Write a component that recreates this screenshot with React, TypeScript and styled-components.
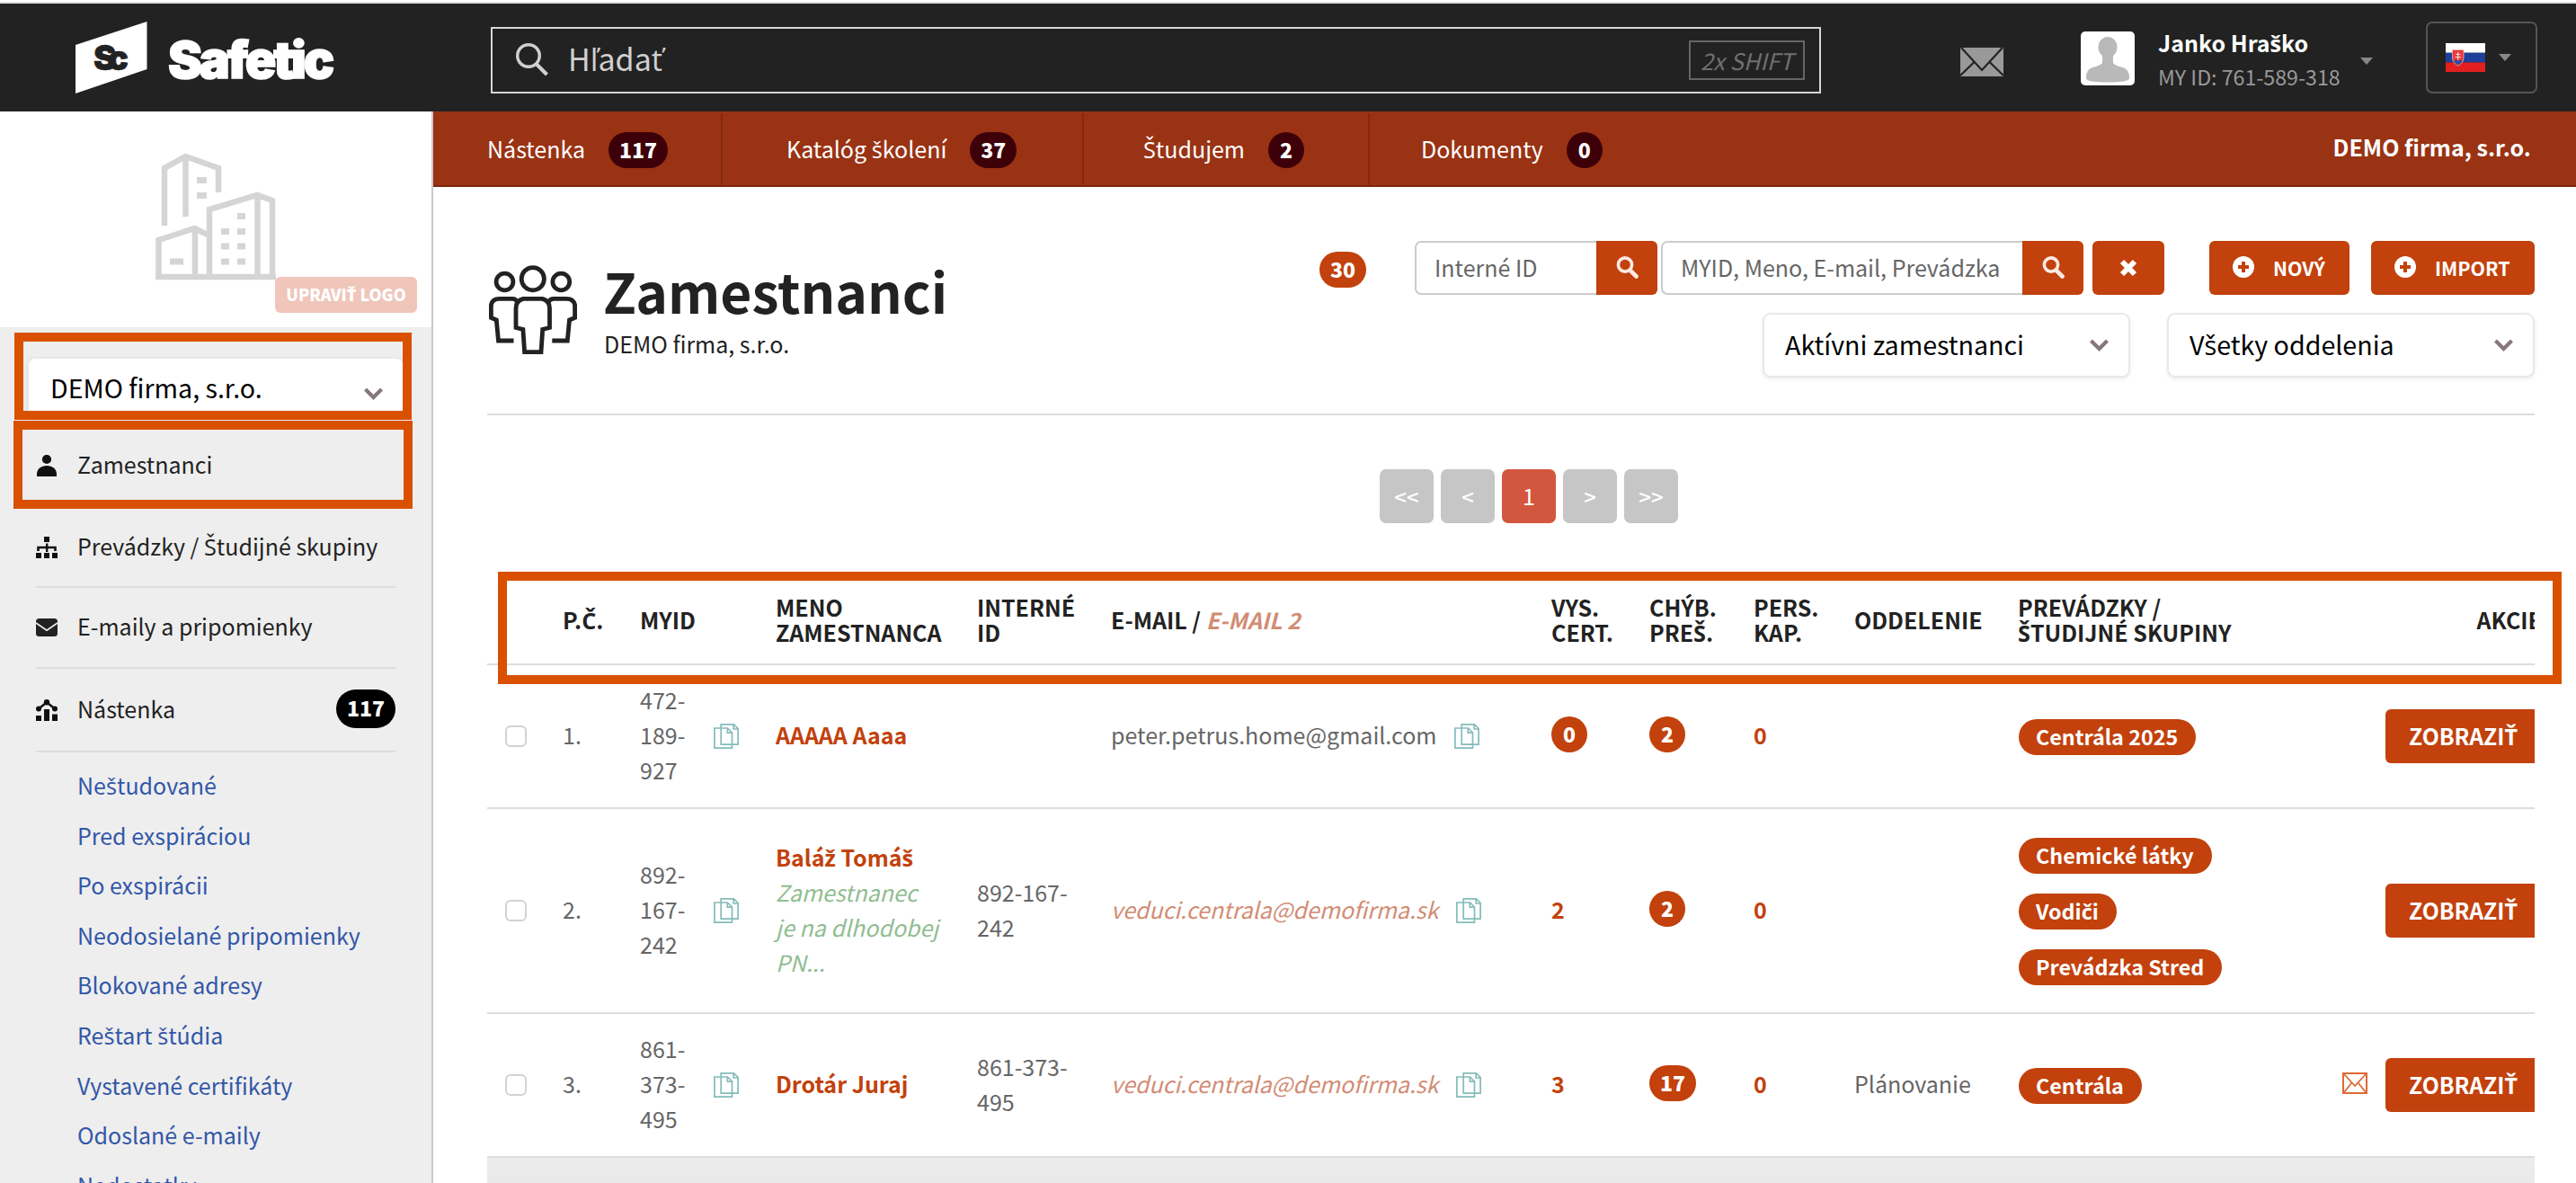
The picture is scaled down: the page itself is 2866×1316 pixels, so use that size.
import React from "react";
import styled, { createGlobalStyle, css } from "styled-components";

const BRAND = "#c2410c";
const MARK = "#d95000";
const INK = "#222";
const MUTED = "#666";
const LINE = "#ddd";

const GlobalStyle = createGlobalStyle`
  * { box-sizing: border-box; }
  html, body { margin: 0; padding: 0; }
  body {
    width: 2866px; height: 1316px; overflow: hidden; background: #fff; color: ${INK};
    font-family: "Noto Sans CJK SC", "Open Sans", sans-serif;
    font-size: 25px; line-height: 39px;
  }
  h1, p, ul { margin: 0; padding: 0; }
`;

/* Letters with a caron are set in Open Sans, which has them precomposed. */
const Accented = styled.span`
  font-family: "Open Sans", "Noto Sans", sans-serif;
  font-size: 1.01em;
  line-height: 0;
`;

const T = ({ children }: { children: string }) => (
  <>
    {children.split(/([čďěľňřšťžČĎĚĽŇŘŠŤŽ])/).map((part, i) =>
      i % 2 ? <Accented key={i}>{part}</Accented> : part
    )}
  </>
);

/* ---------- shared ---------- */

const Badge = styled.span<{ $bg?: string; $h?: number; $minW?: number }>`
  display: inline-flex; align-items: center; justify-content: center;
  height: ${(p) => p.$h ?? 40}px; min-width: ${(p) => p.$minW ?? 40}px; padding: 0 12px 2px;
  border-radius: 22px; background: ${(p) => p.$bg ?? BRAND};
  color: #fff; font-size: 23px; font-weight: 900; line-height: 1;
`;

const Highlight = styled.div<{ $l: number; $t: number; $w: number; $h: number }>`
  position: absolute; z-index: 5; pointer-events: none;
  left: ${(p) => p.$l}px; top: ${(p) => p.$t}px; width: ${(p) => p.$w}px; height: ${(p) => p.$h}px;
  border: 10px solid ${MARK};
`;

const SelectBox = styled.div<{ $w: number; $side?: boolean }>`
  display: flex; align-items: center; justify-content: space-between;
  width: ${(p) => p.$w}px; height: 72px; padding: 0 22px 3px 23px;
  border: 2px solid #e8e8ec; border-radius: 9px; background: #fff;
  box-shadow: 0 2px 4px rgba(0, 0, 0, 0.07);
  color: #000; font-size: 28.6px;
  svg { margin-top: 3px; }
  ${(p) => p.$side && css`padding: 0 22px 6px 24px; svg { margin-top: 15px; }`}
`;

const Chevron = () => (
  <svg width="21" height="14" viewBox="0 0 21 14" fill="none">
    <path d="M1.500 2L10.500 11L19.500 2" stroke="#86777b" strokeWidth="4.200" />
  </svg>
);

const Caret = () => (
  <svg width="14" height="8" viewBox="0 0 14 8"><path d="M0 0H14L7 8Z" fill="#888" /></svg>
);

const CopyIcon = () => (
  <svg width="28" height="28" viewBox="0 0 28 28" fill="none" stroke="#84bcba" strokeWidth="1.700">
    <path d="M8.200 .9H22.500L27.100 5.500V23.200H8.200Z" />
    <path d="M22.200 .9V6H27" />
    <path d="M.9 5H15.500L20.500 10V27.100H.9Z" />
    <path d="M15.300 5V10.200H20.400" />
  </svg>
);

/* ---------- top bar ---------- */

const TopBar = styled.header`
  display: flex; align-items: center; height: 124px; padding: 4px 42px 0 84px;
  border-top: 2px solid #fff; box-shadow: inset 0 2px #dedede; background: ${INK};
`;
const Logo = styled.svg`flex: none; margin-right: 172px;`;
const SearchBox = styled.div`
  display: flex; align-items: center; width: 1480px; height: 74px; margin-top: 4px;
  padding: 0 16px 0 25px; border: 2px solid #d6d6d2; color: #d0d0d0;
`;
const SearchLabel = styled.span`flex: 1; margin: -6px 0 0 21px; font-size: 34px;`;
const Kbd = styled.span`
  display: flex; align-items: center; justify-content: center; width: 129px; height: 44px;
  padding-bottom: 1px; border: 2px solid #666; color: #707070; font-size: 25.5px; font-style: italic;
`;
const MailIcon = styled.svg`margin: 8px 86px 0 155px;`;
const Avatar = styled.svg`flex: none;`;
const Who = styled.div`width: 209px; margin: 2px 0 0 26px; line-height: 38px; white-space: nowrap;`;
const WhoName = styled.div`color: #fff; font-size: 25px; font-weight: 700;`;
const WhoId = styled.div`color: #999; font-size: 23.2px;`;
const CaretSlot = styled.span`display: flex; margin: 6px 59px 0 16px;`;
const LangBox = styled.div`
  display: flex; align-items: center; gap: 15px; width: 124px; height: 80px; margin-top: -2px;
  padding-left: 20px; border: 2px solid #555; border-radius: 7px;
`;

/* ---------- frame ---------- */

const Frame = styled.div`display: grid; grid-template-columns: 482px minmax(0, 1fr); height: 1192px;`;
const Side = styled.aside`
  display: flex; flex-direction: column; overflow: hidden;
  border-right: 2px solid #c9c9c9; background: #eee;
`;
const LogoPanel = styled.div`
  position: relative; display: flex; justify-content: center; height: 240px;
  padding-top: 46px; background: #fff; flex: none;
`;
const EditLogo = styled.span`
  position: absolute; right: 16px; bottom: 16px; width: 158px; height: 40px;
  display: flex; align-items: center; justify-content: center; padding-bottom: 1px;
  border-radius: 6px; background: #f0c6ba; color: #fff; font-size: 17.9px; font-weight: 900;
`;
const CompanyPicker = styled.div`position: relative; height: 104px; padding: 33px 0 0 30px; flex: none;`;
const MenuItem = styled.div<{ $h: number; $pb?: number; $pt?: number }>`
  position: relative; display: flex; align-items: center; flex: none;
  height: ${(p) => p.$h}px; margin: 0 40px; padding: ${(p) => p.$pt ?? 0}px 0 ${(p) => p.$pb ?? 0}px;
  border-bottom: 2px solid ${LINE};
  svg { margin-right: 22px; margin-top: 2px; }
  ${Badge} { margin-left: auto; }
`;
const MenuText = styled.div`white-space: nowrap;`;
const SubList = styled.ul`padding: 9px 0 0 86px; list-style: none;`;
const SubLink = styled.li`height: 55.6px; line-height: 55.6px; color: #3257a8; white-space: nowrap;`;

const NavBar = styled.nav`
  display: flex; height: 84px; border-bottom: 2px solid #7f260e; background: #993314; color: #fff;
`;
const NavItem = styled.div<{ $w: number; $pl: number; $last?: boolean }>`
  display: flex; align-items: center; gap: 26px; width: ${(p) => p.$w}px; margin-top: 2px;
  padding: 0 0 2px ${(p) => p.$pl}px; white-space: nowrap;
  border-right: ${(p) => (p.$last ? "0" : "2px solid #85290f")};
  ${Badge} { margin-top: 4px; }
`;
const NavCompany = styled.div`margin: 20px 50px 0 auto; font-weight: 700;`;

const Content = styled.main`padding: 0 46px 0 60px; overflow: hidden;`;
const PageHead = styled.section`
  display: flex; justify-content: space-between; height: 254px; border-bottom: 2px solid ${LINE};
`;
const TitleGroup = styled.div`display: flex; padding: 85px 0 0 0; gap: 29px;`;
const PeopleIcon = styled.svg`margin: 2px 0 0 2px;`;
const Title = styled.h1`font-size: 60.5px; font-weight: 700; line-height: 60px;`;
const Subtitle = styled.p`margin: 11px 0 0 1px; line-height: 36px;`;
const Tools = styled.div`display: flex; flex-direction: column; align-items: flex-end; gap: 20px; padding-top: 60px;`;
const ToolRow = styled.div<{ $gap?: number }>`display: flex; align-items: center; gap: ${(p) => p.$gap ?? 0}px;`;
const CountSlot = styled.span`display: flex; margin: 4px 54px 0 0;`;
const Field = styled.div<{ $w: number; $mr: number }>`display: flex; width: ${(p) => p.$w}px; height: 60px; margin-right: ${(p) => p.$mr}px;`;
const Input = styled.div`
  flex: 1; padding-left: 20px; line-height: 54px; color: ${MUTED}; white-space: nowrap;
  border: 2px solid #ccc; border-right: 0; border-radius: 7px 0 0 7px;
`;
const IconButton = styled.div<{ $w: number; $joined?: boolean; $mr?: number }>`
  display: flex; align-items: center; justify-content: center; width: ${(p) => p.$w}px; height: 60px;
  margin-right: ${(p) => p.$mr ?? 0}px; background: ${BRAND};
  border-radius: ${(p) => (p.$joined ? "0 6px 6px 0" : "6px")};
`;
const Button = styled.div<{ $w?: number; $size?: number }>`
  display: flex; align-items: center; gap: 21px; height: 60px; padding: 0 26px 2px;
  ${(p) => p.$w && `width: ${p.$w}px;`}
  flex: none; border-radius: 6px; background: ${BRAND}; color: #fff; white-space: nowrap;
  font-size: ${(p) => p.$size ?? 21.4}px; font-weight: 700;
`;

const Pager = styled.div`display: flex; justify-content: center; gap: 8px; padding: 60px 0 58px 40px;`;
const PageButton = styled.span<{ $on?: boolean }>`
  display: flex; align-items: center; justify-content: center; width: 60px; height: 60px;
  border-radius: 7px; padding-bottom: 2px; color: #fff;
  font-size: ${(p) => (p.$on ? 25 : 24)}px; font-weight: ${(p) => (p.$on ? 400 : 500)};
  background: ${(p) => (p.$on ? "#d3573f" : "#c6c6c6")};
`;

/* ---------- table ---------- */

const TableWrap = styled.section`position: relative;`;
const TableClip = styled.div`overflow: hidden;`;
const Row = styled.div<{ $h: number; $head?: boolean }>`
  display: grid;
  grid-template-columns: 64px 86px 151px 224px 149px 490px 109px 116px 112px 182px 299px 284px;
  align-items: center; height: ${(p) => p.$h}px; width: 2286px;
  padding: 0 0 ${(p) => (p.$head ? 0 : 3)}px 20px;
  border-bottom: 2px solid ${LINE}; color: ${MUTED};
  ${(p) => p.$head && css`color: ${INK}; font-weight: 700; line-height: 28px; white-space: nowrap;`}
`;
const FootRow = styled.div`height: 60px; background: linear-gradient(#ececec, #e6e6e6);`;
const Check = styled.span`
  width: 24px; height: 24px; margin-top: 2px; border: 2px solid #d2d2d2; border-radius: 6px; background: #fff;
`;
const IdCell = styled.div`display: flex; align-items: center; svg { margin-top: 3px; }`;
const IdText = styled.div`width: 82px;`;
const Strong = styled.div`color: ${BRAND}; font-weight: 700; white-space: nowrap;`;
const Note = styled.div`color: #90bd90; font-style: italic; white-space: nowrap;`;
const Faded = styled.span`color: #d28c74; font-style: italic;`;
const MailCell = styled.div`display: flex; align-items: center; gap: 20px; svg { margin-top: 3px; }`;
const BadgeSlot = styled.div`display: flex; margin-top: -1px;`;
const Pills = styled.div`display: flex; flex-direction: column; align-items: flex-start; gap: 22px; margin-top: 5px; padding-left: 1px;`;
const Pill = styled.span`
  height: 40px; padding: 0 20px 0 19px; border-radius: 20px; background: ${BRAND}; color: #fff;
  font-size: 23.3px; font-weight: 700; line-height: 38px; white-space: nowrap;
`;
const Actions = styled.div`display: flex; justify-content: flex-end; align-items: center; gap: 20px; margin-top: 3px;`;
const HeadRight = styled.div`text-align: right;`;
const Letter = styled.svg`margin-top: -4px;`;

const LogoArt = () => (
  <Logo width="290" height="82" viewBox="84 24 290 82">
    <path d="M84 50L163.500 24V77L84 104Z" fill="#fff" />
    <text x="104" y="77.500" fontFamily="Inter" fontWeight="900" fontSize="38" textLength="39" fill={INK} stroke={INK} strokeWidth="0.600">Sc</text>
    <text x="187" y="86.500" fontFamily="Inter" fontWeight="900" fontSize="57" textLength="185" fill="#fff" stroke="#fff" strokeWidth="1.600">Safetic</text>
  </Logo>
);

const Building = () => (
  <svg width="134" height="142" viewBox="0 0 134 142" fill="none" stroke="#d5d5d5" strokeWidth="6.500">
    <path d="M10 81V17L33.500 4L70 17V44" />
    <path d="M33.500 5V71" />
    <path d="M60 139V63L113 47L130 53V139" />
    <path d="M113.500 47V139M44 86V139" />
    <path d="M3.500 139V97L43.500 84L58 91" />
    <path d="M0 138H134" />
    <g fill="#d5d5d5" stroke="none">
      <path d="M46 27h11v7H46zM46 44h11v7H46zM91 67h9v7H91zM73 84h9v7H73zM91 84h9v7H91zM73 100.500h9v7H73zM91 100.500h9v7H91zM73 117.500h9v7H73zM91 117.500h9v7H91zM16 117.500h15v7H16z" />
    </g>
  </svg>
);

const People = () => (
  <PeopleIcon width="98" height="99" viewBox="0 0 98 99" fill="none" stroke={INK} strokeWidth="4.800">
    <circle cx="48.800" cy="15.200" r="12.600" />
    <circle cx="17.500" cy="18.500" r="9.400" />
    <circle cx="80.300" cy="18.500" r="9.400" />
    <path d="M38 37.400H59.500Q67.500 39.500 67.500 48V69.500L59.700 71.500L58 96.600H39.600L37.900 71.500L30 69.500V48Q30 39.500 38 37.400Z" />
    <path d="M27.500 84H10.500L8.300 61L2.400 58.500V44Q4 37.400 11.500 37.400H26Q30 37.500 31.500 41" />
    <path d="M70.300 84H87.300L89.500 61L95.600 58.500V44Q94 37.400 86.300 37.400H72Q68 37.500 66 41" />
  </PeopleIcon>
);

const Flag = () => (
  <svg width="44" height="32" viewBox="0 0 44 32">
    <path d="M0 0H44V10.700H0Z" fill="#fff" />
    <path d="M0 10.700H44V21.400H0Z" fill="#1f3f9a" />
    <path d="M0 21.400H44V32H0Z" fill="#e3201f" />
    <path d="M7.500 7.500H20V16Q20 22 13.700 25Q7.500 22 7.500 16Z" fill="#e8383a" stroke="#f3b8bb" strokeWidth="0.800" />
    <path d="M13.700 10V18.500M11 12.500H16.500M10.500 15.500H17" stroke="#f6d5d8" strokeWidth="1.200" />
    <path d="M9 20Q11 18 13.700 19.500Q16.500 18 18.500 20Q17 23 13.700 24.500Q10.500 23 9 20Z" fill="#2c4ba3" />
  </svg>
);

const Magnifier = () => (
  <svg width="26" height="26" viewBox="0 0 26 26" fill="none" stroke="#fbe9e2" strokeWidth="3.600">
    <circle cx="11" cy="9.500" r="7.600" />
    <path d="M16.500 15.500L23.500 22.500" strokeWidth="4.600" strokeLinecap="round" />
  </svg>
);

const PlusCircle = () => (
  <svg width="24" height="24" viewBox="0 0 24 24">
    <circle cx="12" cy="12" r="12" fill="#fff" />
    <path d="M12 6V18M6 12H18" stroke={BRAND} strokeWidth="4" />
  </svg>
);

const sideIcons = {
  person: (
    <svg width="24" height="24" viewBox="0 0 24 24" fill="#111">
      <circle cx="12" cy="5" r="5.100" /><path d="M1 24V21.500C1 15.500 6 12 12 12S23 15.500 23 21.500V24Z" />
    </svg>
  ),
  tree: (
    <svg width="24" height="24" viewBox="0 0 24 24" fill="#111">
      <path d="M9 0h6v6H9zM0 18h6v6H0zM9 18h6v6H9zM18 18h6v6H18zM11 7.500h2.400V17H11z" />
      <path d="M2.500 16V12H21.500V16" fill="none" stroke="#111" strokeWidth="2.600" />
    </svg>
  ),
  mail: (
    <svg width="24" height="20" viewBox="0 0 24 20">
      <rect width="24" height="20" rx="3.500" fill={INK} />
      <path d="M0 5L12 13.200L24 5" fill="none" stroke="#eee" strokeWidth="1.800" />
    </svg>
  ),
  chart: (
    <svg width="24" height="24" viewBox="0 0 24 24" fill="#111">
      <path d="M0 18h6v6H0zM9 11h6v13H9zM18 16.500h6V24H18z" />
      <circle cx="3" cy="10.500" r="3" /><circle cx="12" cy="3.200" r="3.200" /><circle cx="21" cy="10.500" r="3" />
      <path d="M3 10.500L12 3.200L21 10.500" fill="none" stroke="#111" strokeWidth="2.400" />
    </svg>
  ),
};

const subLinks = [
  "Neštudované", "Pred exspiráciou", "Po exspirácii", "Neodosielané pripomienky", "Blokované adresy",
  "Reštart štúdia", "Vystavené certifikáty", "Odoslané e-maily", "Nedostatky",
];

type Employee = {
  h: number; id: string[]; name: string; note?: string[]; internal?: string[]; email: string; secondary?: boolean;
  certs: string; certsBadge?: boolean; missing: string; dept?: string; groups: string[]; letter?: boolean;
};

const employees: Employee[] = [
  { h: 160, id: ["472-", "189-", "927"], name: "AAAAA Aaaa", email: "peter.petrus.home@gmail.com", certs: "0", certsBadge: true, missing: "2", groups: ["Centrála 2025"] },
  { h: 228, id: ["892-", "167-", "242"], name: "Baláž Tomáš", note: ["Zamestnanec", "je na dlhodobej", "PN..."], internal: ["892-167-", "242"], email: "veduci.centrala@demofirma.sk", secondary: true, certs: "2", missing: "2", groups: ["Chemické látky", "Vodiči", "Prevádzka Stred"] },
  { h: 160, id: ["861-", "373-", "495"], name: "Drotár Juraj", internal: ["861-373-", "495"], email: "veduci.centrala@demofirma.sk", secondary: true, certs: "3", missing: "17", dept: "Plánovanie", groups: ["Centrála"], letter: true },
];

const headings = [["P.Č."], ["MYID"], ["MENO", "ZAMESTNANCA"], ["INTERNÉ", "ID"]];
const headings2 = [["VYS.", "CERT."], ["CHÝB.", "PREŠ."], ["PERS.", "KAP."], ["ODDELENIE"], ["PREVÁDZKY /", "ŠTUDIJNÉ SKUPINY"]];

const Lines = ({ of }: { of: string[] }) => (
  <div>{of.map((l) => <div key={l}><T>{l}</T></div>)}</div>
);

const EmployeeRow = ({ e, n }: { e: Employee; n: number }) => (
  <Row $h={e.h}>
    <Check />
    <div>{n}.</div>
    <IdCell><IdText><Lines of={e.id} /></IdText><CopyIcon /></IdCell>
    <div>
      <Strong><T>{e.name}</T></Strong>
      {e.note?.map((l) => <Note key={l}>{l}</Note>)}
    </div>
    <Lines of={e.internal ?? []} />
    <MailCell>{e.secondary ? <Faded>{e.email}</Faded> : <span>{e.email}</span>}<CopyIcon /></MailCell>
    {e.certsBadge ? <BadgeSlot><Badge>{e.certs}</Badge></BadgeSlot> : <Strong>{e.certs}</Strong>}
    <BadgeSlot><Badge>{e.missing}</Badge></BadgeSlot>
    <Strong>0</Strong>
    <div>{e.dept}</div>
    <Pills>{e.groups.map((g) => <Pill key={g}><T>{g}</T></Pill>)}</Pills>
    <Actions>
      {e.letter && (
        <Letter width="28" height="24" viewBox="0 0 28 24" fill="none" stroke="#df6a35" strokeWidth="1.800">
          <path d="M1 1H27V23H1Z" strokeWidth="2" /><path d="M2 2L14 15L26 2M2 22L10.500 11.500M26 22L17.500 11.500" />
        </Letter>
      )}
      <Button $size={24.8} $w={174}><span><T>ZOBRAZIŤ</T></span></Button>
    </Actions>
  </Row>
);

export default function App() {
  return (
    <>
      <GlobalStyle />
      <TopBar>
        <LogoArt />
        <SearchBox>
          <svg width="38" height="38" viewBox="0 0 38 38" fill="none" stroke="#d0d0d0" strokeWidth="3.400">
            <circle cx="15" cy="14" r="12.300" /><path d="M23.500 23L35.500 35" strokeWidth="4" />
          </svg>
          <SearchLabel><T>Hľadať</T></SearchLabel>
          <Kbd>2x SHIFT</Kbd>
        </SearchBox>
        <MailIcon width="48" height="32" viewBox="0 0 48 32">
          <path d="M0 0H48V32H0Z" fill="#999" />
          <path d="M1 0L24 25L47 0M0 31L16 15.500M48 31L32 15.500" fill="none" stroke={INK} strokeWidth="2.200" />
        </MailIcon>
        <Avatar width="60" height="60" viewBox="0 0 60 60">
          <rect width="60" height="60" rx="5" fill="#fff" />
          <ellipse cx="30" cy="17.500" rx="10.500" ry="11.500" fill="#b9b9b9" />
          <path d="M24 24H36V35Q38 38 47 40Q54 42 54 52Q54 56.500 30 56.500T6 52Q6 42 13 40Q22 38 24 35Z" fill="#b9b9b9" />
        </Avatar>
        <Who>
          <WhoName><T>Janko Hraško</T></WhoName>
          <WhoId>MY ID: 761-589-318</WhoId>
        </Who>
        <CaretSlot><Caret /></CaretSlot>
        <LangBox><Flag /><Caret /></LangBox>
      </TopBar>

      <Frame>
        <Side>
          <LogoPanel>
            <Building />
            <EditLogo><span><T>UPRAVIŤ LOGO</T></span></EditLogo>
          </LogoPanel>
          <CompanyPicker>
            <Highlight $l={16} $t={6} $w={442} $h={97} />
            <SelectBox $w={420} $side>DEMO firma, s.r.o.<Chevron /></SelectBox>
          </CompanyPicker>
          <MenuItem $h={96} $pt={3}>
            <Highlight $l={-25} $t={0} $w={444} $h={98} />
            {sideIcons.person}<MenuText>Zamestnanci</MenuText>
          </MenuItem>
          <MenuItem $h={90} $pb={1}>{sideIcons.tree}<MenuText><T>Prevádzky / Študijné skupiny</T></MenuText></MenuItem>
          <MenuItem $h={90} $pb={3}>{sideIcons.mail}<MenuText>E-maily a pripomienky</MenuText></MenuItem>
          <MenuItem $h={93} $pb={2}>{sideIcons.chart}<MenuText>Nástenka</MenuText><Badge $bg="#000" $h={43} $minW={66}>117</Badge></MenuItem>
          <SubList>{subLinks.map((l) => <SubLink key={l}><T>{l}</T></SubLink>)}</SubList>
        </Side>

        <div>
          <NavBar>
            <NavItem $w={322} $pl={60}>Nástenka<Badge $bg="#3d0009">117</Badge></NavItem>
            <NavItem $w={402} $pl={71}><span><T>Katalóg školení</T></span><Badge $bg="#3d0009">37</Badge></NavItem>
            <NavItem $w={318} $pl={66}><span><T>Študujem</T></span><Badge $bg="#3d0009">2</Badge></NavItem>
            <NavItem $w={322} $pl={57} $last>Dokumenty<Badge $bg="#3d0009">0</Badge></NavItem>
            <NavCompany>DEMO firma, s.r.o.</NavCompany>
          </NavBar>
          <Content>
            <PageHead>
              <TitleGroup>
                <People />
                <div>
                  <Title>Zamestnanci</Title>
                  <Subtitle>DEMO firma, s.r.o.</Subtitle>
                </div>
              </TitleGroup>
              <Tools>
                <ToolRow>
                  <CountSlot><Badge>30</Badge></CountSlot>
                  <Field $w={270} $mr={4}><Input>Interné ID</Input><IconButton $w={68} $joined><Magnifier /></IconButton></Field>
                  <Field $w={470} $mr={10}><Input>MYID, Meno, E-mail, Prevádzka</Input><IconButton $w={68} $joined><Magnifier /></IconButton></Field>
                  <IconButton $w={80} $mr={50}>
                    <svg width="20" height="20" viewBox="0 0 20 20"><path d="M3 3L17 17M17 3L3 17" stroke="#fff" strokeWidth="6" /></svg>
                  </IconButton>
                  <ToolRow $gap={24}>
                    <Button $w={156}><PlusCircle />NOVÝ</Button>
                    <Button $w={182}><PlusCircle />IMPORT</Button>
                  </ToolRow>
                </ToolRow>
                <ToolRow $gap={41}>
                  <SelectBox $w={409}>Aktívni zamestnanci<Chevron /></SelectBox>
                  <SelectBox $w={409}><span><T>Všetky oddelenia</T></span><Chevron /></SelectBox>
                </ToolRow>
              </Tools>
            </PageHead>

            <Pager>
              <PageButton>&lt;&lt;</PageButton>
              <PageButton>&lt;</PageButton>
              <PageButton $on>1</PageButton>
              <PageButton>&gt;</PageButton>
              <PageButton>&gt;&gt;</PageButton>
            </Pager>

            <TableWrap>
              <Highlight $l={12} $t={-4} $w={2296} $h={125} />
              <TableClip>
                <Row $h={100} $head>
                  <span />
                  {headings.map((h) => <Lines key={h[0]} of={h} />)}
                  <div>E-MAIL / <Faded>E-MAIL 2</Faded></div>
                  {headings2.map((h) => <Lines key={h[0]} of={h} />)}
                  <HeadRight>AKCIE</HeadRight>
                </Row>
                {employees.map((e, i) => <EmployeeRow key={e.name} e={e} n={i + 1} />)}
                <FootRow />
              </TableClip>
            </TableWrap>
          </Content>
        </div>
      </Frame>
    </>
  );
}
